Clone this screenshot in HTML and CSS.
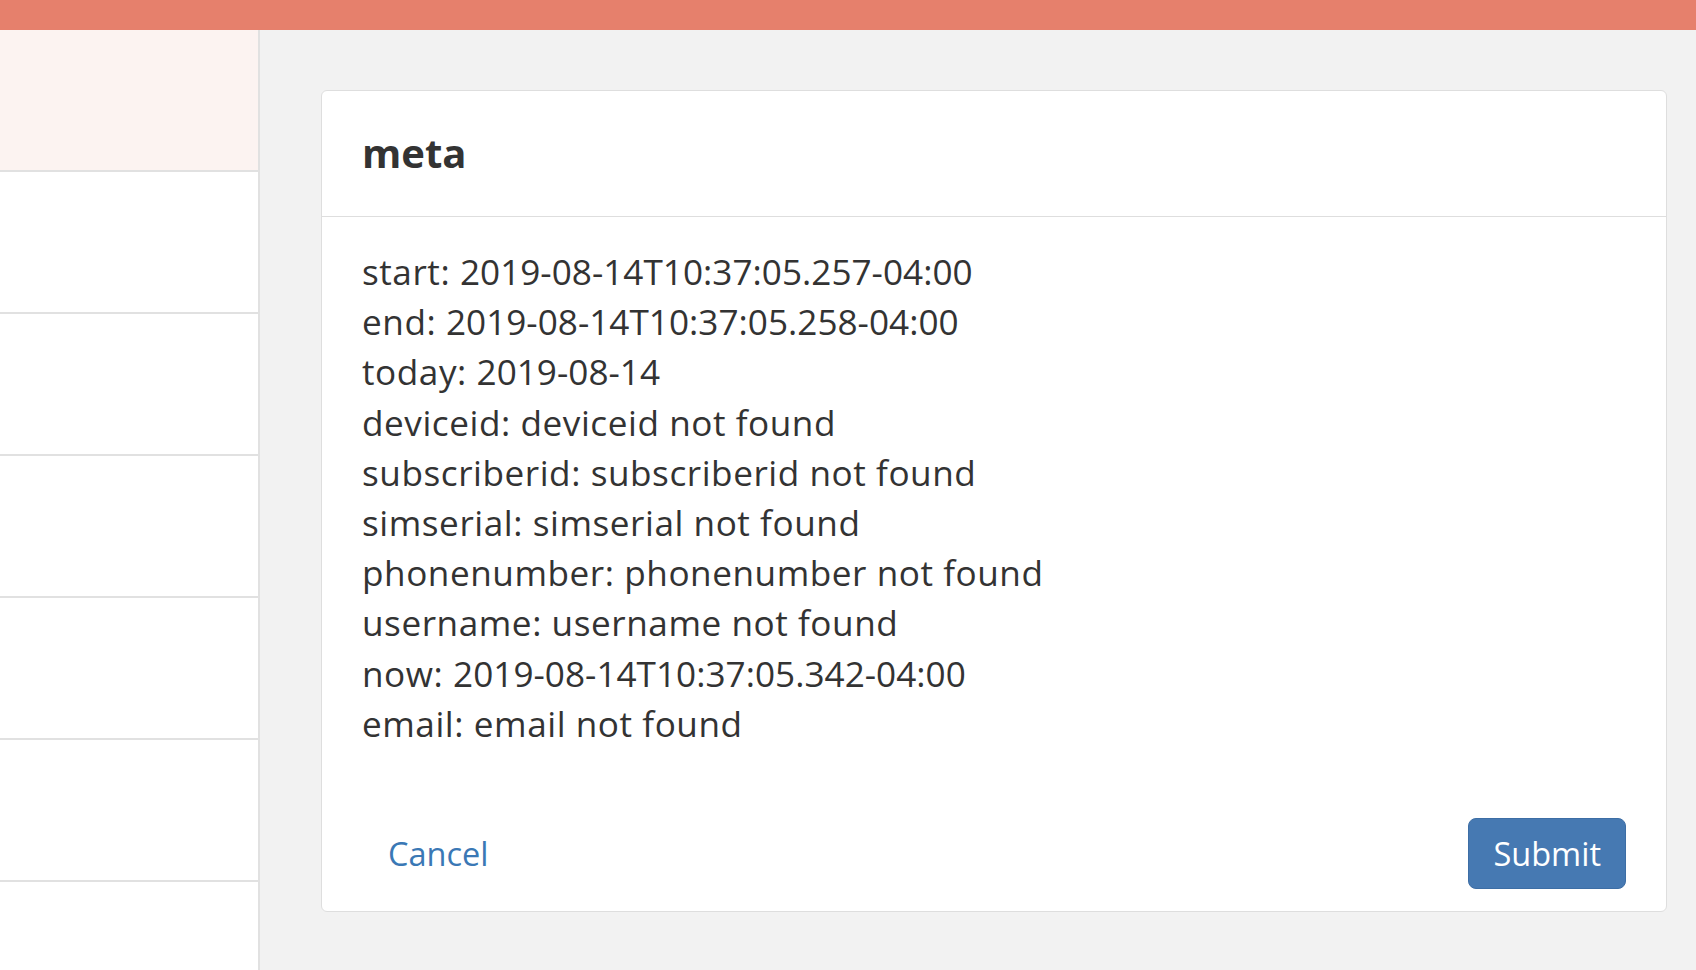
FILE: index.html
```html
<!DOCTYPE html>
<html lang="en">
<head>
<meta charset="utf-8">
<title>meta</title>
<link rel="stylesheet" href="styles.css">
</head>
<body>
<div class="topbar"></div>
<div class="layout">
  <aside class="sidebar">
    <div class="side-item active"></div>
    <div class="side-item"></div>
    <div class="side-item"></div>
    <div class="side-item"></div>
    <div class="side-item"></div>
    <div class="side-item"></div>
    <div class="side-item"></div>
  </aside>
  <main class="main">
    <section class="card">
      <header class="card-header">
        <h4 class="card-title">meta</h4>
      </header>
      <div class="card-body">
        <div class="row"><span class="key">start:</span> <span class="val num">2019-08-14T10:37:05.257-04:00</span></div>
        <div class="row"><span class="key">end:</span> <span class="val num">2019-08-14T10:37:05.258-04:00</span></div>
        <div class="row"><span class="key">today:</span> <span class="val num">2019-08-14</span></div>
        <div class="row"><span class="key">deviceid:</span> <span class="val">deviceid not found</span></div>
        <div class="row"><span class="key">subscriberid:</span> <span class="val">subscriberid not found</span></div>
        <div class="row"><span class="key">simserial:</span> <span class="val">simserial not found</span></div>
        <div class="row"><span class="key">phonenumber:</span> <span class="val">phonenumber not found</span></div>
        <div class="row"><span class="key">username:</span> <span class="val">username not found</span></div>
        <div class="row"><span class="key">now:</span> <span class="val num">2019-08-14T10:37:05.342-04:00</span></div>
        <div class="row"><span class="key">email:</span> <span class="val">email not found</span></div>
      </div>
      <footer class="card-footer">
        <button class="btn btn-link" type="button">Cancel</button>
        <button class="btn btn-primary" type="button">Submit</button>
      </footer>
    </section>
  </main>
</div>
</body>
</html>
```
FILE: styles.css
```css
* {
  box-sizing: border-box;
}

html, body {
  margin: 0;
  padding: 0;
  height: 100%;
}

body {
  font-family: "Open Sans", "Liberation Sans", sans-serif;
  color: #333333;
  background: #f2f2f2;
  overflow: hidden;
}

.topbar {
  height: 30px;
  background: #e6806c;
}

.layout {
  display: flex;
  height: 940px;
}

.sidebar {
  width: 260px;
  flex: 0 0 260px;
  background: #ffffff;
  border-right: 2px solid #e1e1e1;
  display: flex;
  flex-direction: column;
  overflow: hidden;
}

.side-item {
  flex: 0 0 142px;
  border-bottom: 2px solid #e1e1e1;
  background: #ffffff;
}

.side-item.active {
  background: #fcf3f1;
}

.main {
  flex: 1;
  padding: 60px 29px 0 61px;
  background: #f2f2f2;
}

.card {
  background: #ffffff;
  border: 1px solid #dedede;
  border-radius: 6px;
}

.card-header {
  padding: 40px 40px 41px;
  border-bottom: 1px solid #dedede;
}

.card-title {
  margin: 0;
  font-size: 40px;
  line-height: 44px;
  font-weight: 700;
  color: #333333;
}

.card-body {
  padding: 29px 40px 29px;
  font-size: 35.15px;
  line-height: 50.2px;
}

.row {
  white-space: nowrap;
  letter-spacing: 0.55px;
}

.num {
  letter-spacing: 0.02px;
}

.card-footer {
  padding: 41px 40px 21.5px 40px;
  display: flex;
  justify-content: space-between;
  align-items: center;
}

.btn {
  font-family: "Open Sans", "Liberation Sans", sans-serif;
  font-size: 32.5px;
  line-height: 50.2px;
  padding: 9.5px 24px;
  border: 1px solid transparent;
  border-radius: 8px;
  background: transparent;
  cursor: pointer;
  margin: 0;
}

.btn-link {
  color: #3a78b5;
  padding-left: 25px;
}

.btn-primary {
  background: #4679b2;
  border-color: #3d6ea5;
  color: #ffffff;
}
```
